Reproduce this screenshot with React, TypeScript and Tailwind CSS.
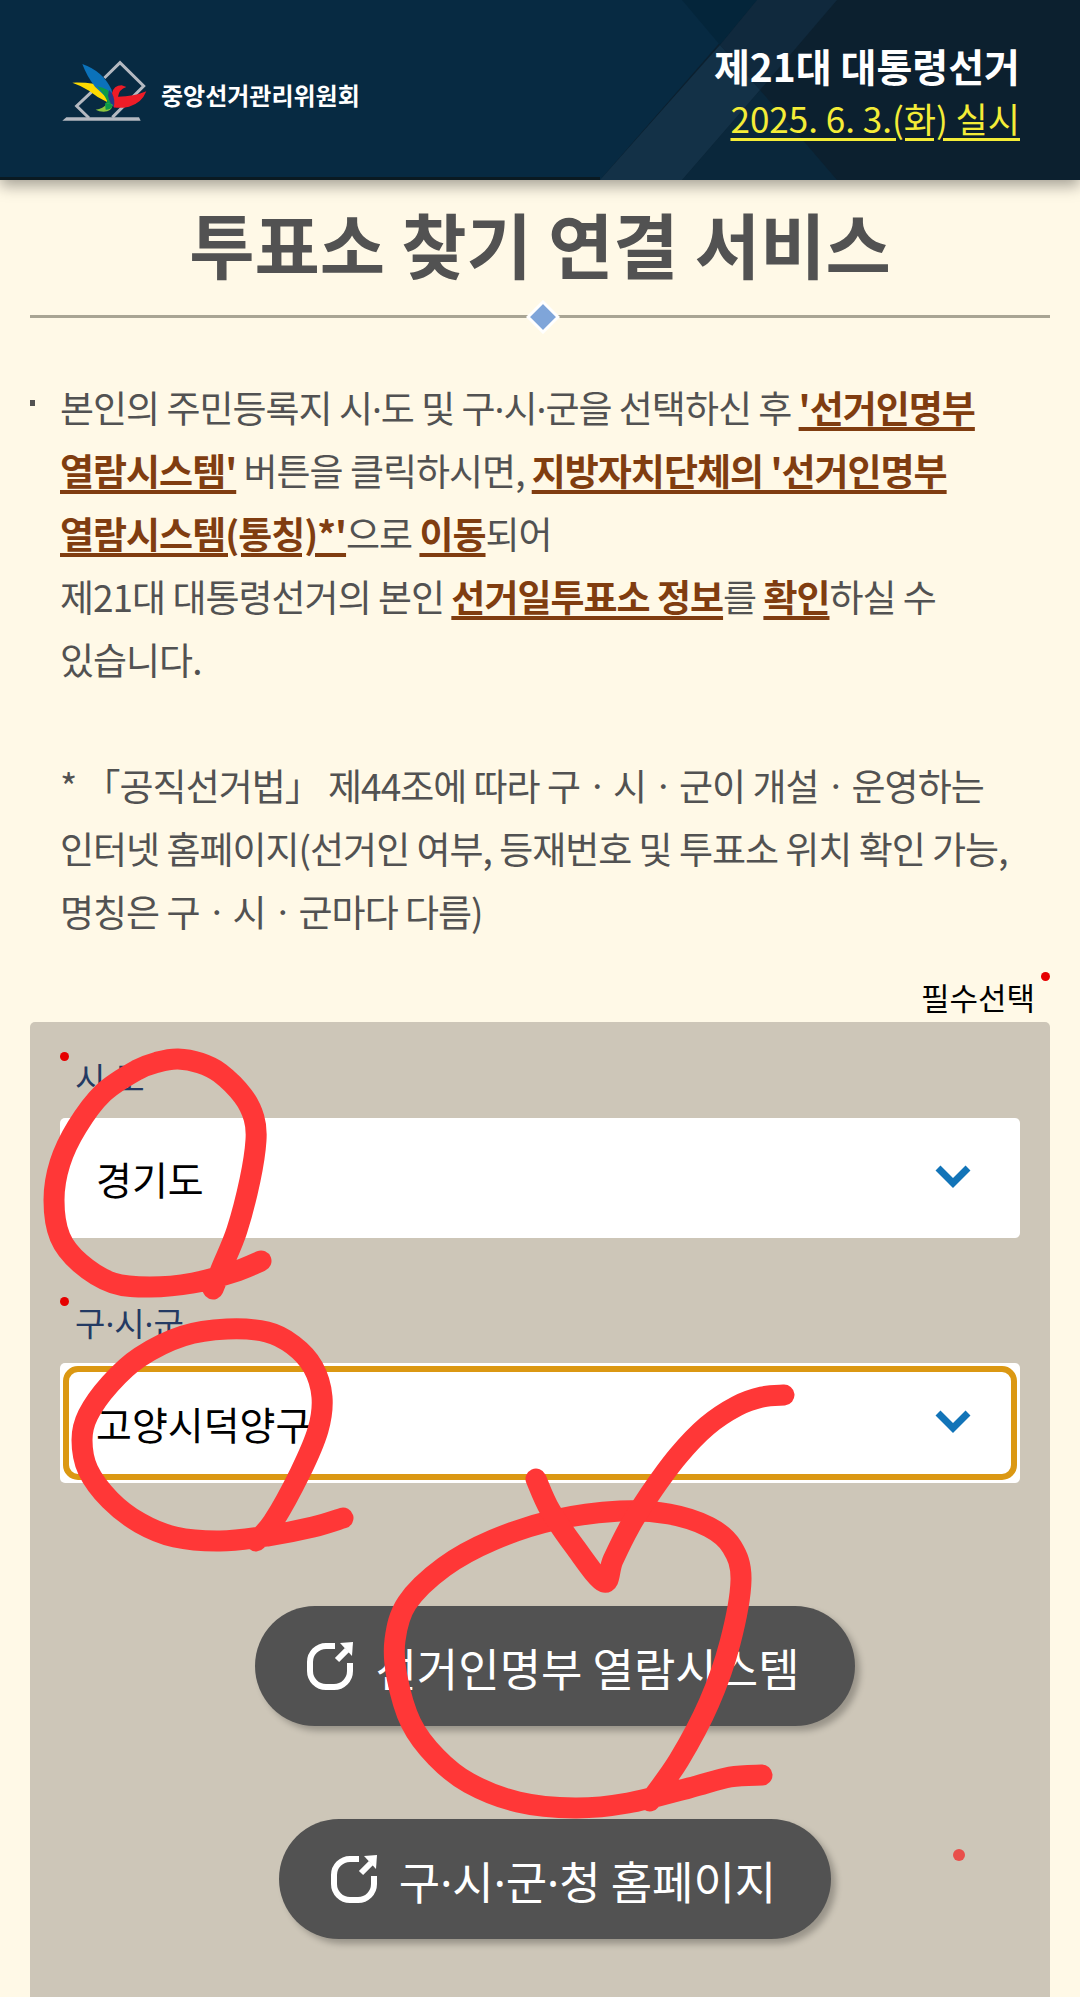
import { Fragment, useState } from "react";

type Point = [number, number];

const sidoOptions = ["경기도", "서울특별시", "인천광역시", "강원특별자치도"];
const gusigunOptions = ["고양시덕양구", "고양시일산동구", "고양시일산서구", "수원시장안구"];

const strokes: Point[][] = [
  [
    [213, 1289], [222, 1267], [237, 1230], [250, 1180], [256, 1140], [254, 1118], [243, 1096], [220, 1073],
    [200, 1063], [178, 1059], [158, 1062], [137, 1070], [103, 1093], [77, 1127], [60, 1163], [54, 1200],
    [60, 1237], [80, 1263], [113, 1283], [150, 1287], [193, 1283], [234, 1272], [261, 1261],
  ],
  [
    [256, 1541], [273, 1522], [300, 1473], [318, 1430], [322, 1397], [313, 1367], [293, 1345],
    [267, 1332], [227, 1329], [183, 1336], [140, 1357], [110, 1384], [88, 1415], [82, 1440],
    [88, 1470], [110, 1500], [140, 1523], [175, 1537], [220, 1541], [267, 1536], [313, 1527],
    [343, 1518],
  ],
  [
    [650, 1801], [679, 1760], [709, 1703], [730, 1643], [741, 1580], [732, 1547], [709, 1527],
    [669, 1514], [620, 1511], [554, 1520], [493, 1540], [444, 1567], [407, 1603], [395, 1640],
    [397, 1677], [411, 1723], [436, 1757], [469, 1783], [518, 1802], [575, 1808], [628, 1803],
    [689, 1788], [730, 1777], [762, 1775],
  ],
  [
    [536, 1479], [550, 1510], [575, 1547], [604, 1582], [613, 1560], [630, 1526], [650, 1494],
    [678, 1456], [707, 1426], [737, 1406], [762, 1397], [784, 1395],
  ],
];

// smooth curve through every point
function toPath(points: Point[]) {
  let d = `M${points[0][0]} ${points[0][1]}`;
  for (let i = 0; i < points.length - 1; i++) {
    const p0 = points[i - 1] ?? points[i];
    const p1 = points[i];
    const p2 = points[i + 1];
    const p3 = points[i + 2] ?? p2;
    d += ` C${p1[0] + (p2[0] - p0[0]) / 6} ${p1[1] + (p2[1] - p0[1]) / 6} ${p2[0] - (p3[0] - p1[0]) / 6} ${p2[1] - (p3[1] - p1[1]) / 6} ${p2[0]} ${p2[1]}`;
  }
  return d;
}

function Logo() {
  return (
    <svg viewBox="67 55 255 189" className="w-[85px] h-[63px]" aria-hidden="true">
      <path
        d="M194 112L241 66L312 136L218 230M148 232L111 196L160 150"
        fill="none"
        stroke="#b4b9c1"
        strokeWidth="9"
      />
      <path d="M80 230H298L303 240H68Z" fill="#b4b9c1" />
      <path d="M98 126Q165 124 198 142Q210 165 202 184Q175 172 148 150Q125 135 98 126Z" fill="#fddb00" />
      <path d="M128 70Q190 92 215 146Q222 165 212 178Q188 160 166 138Q142 108 128 70Z" fill="#0b72ba" />
      <path d="M172 137Q190 140 204 148Q222 170 218 190Q214 205 196 208Q194 190 203 182Q190 155 172 137Z" fill="#0c9a48" />
      <path d="M208 148Q230 165 226 202Q210 190 205 165Z" fill="#263a86" />
      <path d="M168 207Q190 205 203 188L219 192Q216 213 192 213Q178 213 168 207Z" fill="#8cc63e" />
      <path d="M196 188Q212 186 219 194Q216 208 198 207Z" fill="#0c9a48" />
      <path
        d="M217 158Q222 134 246 134L260 139Q238 146 235 168Q282 168 320 152Q306 188 268 198Q240 204 222 200Q228 180 217 158Z"
        fill="#ed1c27"
      />
    </svg>
  );
}

function GoIcon() {
  return (
    <svg viewBox="0 0 48 48" className="w-[48px] h-[48px] shrink-0" aria-hidden="true">
      <path
        d="M29 4H20A16 16 0 0 0 4 20V29A16 16 0 0 0 20 45H28A16 16 0 0 0 44 29V21"
        fill="none"
        stroke="#fff"
        strokeWidth="6"
      />
      <path d="M31 18L41 8" stroke="#fff" strokeWidth="6" />
      <path d="M34 1L47 0L46 14Z" fill="#fff" />
    </svg>
  );
}

function RequiredDot() {
  return <span className="w-[9px] h-[9px] rounded-full bg-[#e60000] shrink-0" />;
}

// the Korean face has a very wide middle dot, so take it from the Latin one
function Dotted({ text }: { text: string }) {
  return text.split("·").map((part, idx) => (
    <Fragment key={idx}>
      {idx > 0 && <span className="font-['Noto_Sans',sans-serif] leading-none">·</span>}
      {part}
    </Fragment>
  ));
}

function Key({ children }: { children: React.ReactNode }) {
  return (
    <strong className="font-bold text-[#803d10] underline decoration-[4px] underline-offset-[4px]">{children}</strong>
  );
}

function SelectField({
  id,
  label,
  options,
  active,
}: {
  id: string;
  label: string;
  options: string[];
  active?: boolean;
}) {
  const [value, setValue] = useState(options[0]);
  return (
    <div>
      <div className="flex gap-[6px] mb-4">
        <RequiredDot />
        <label htmlFor={id} className="text-[33px] leading-[50px] text-[#243a63]">
          <Dotted text={label} />
        </label>
      </div>
      <div className="relative rounded-[5px] bg-white">
        <select
          id={id}
          value={value}
          onChange={(e) => setValue(e.target.value)}
          className={`block w-full h-[120px] pl-9 pr-24 appearance-none rounded-[18px] bg-transparent text-[39px] text-black ${
            active ? "outline-[6px] outline-solid outline-[#db9813] -outline-offset-[9px]" : "outline-none"
          }`}
        >
          {options.map((option) => (
            <option key={option}>{option}</option>
          ))}
        </select>
        <svg
          viewBox="0 0 36 24"
          className="absolute right-[49px] top-[47px] w-[36px] h-[24px] pointer-events-none"
          aria-hidden="true"
        >
          <path d="M3 3L18 18L33 3" fill="none" stroke="#1274b8" strokeWidth="7" />
        </svg>
      </div>
    </div>
  );
}

function GoButton({ text }: { text: string }) {
  return (
    <button
      type="button"
      className="flex items-center gap-[21px] h-[120px] pl-[51px] pr-[55px] rounded-full bg-[#525252] text-white text-[45px] shadow-[5px_5px_6px_rgba(0,0,0,0.25)]"
    >
      <GoIcon />
      <span className="pt-1">
        <Dotted text={text} />
      </span>
    </button>
  );
}

export default function App() {
  return (
    <div className="relative min-h-screen flex flex-col overflow-hidden bg-[#fff9e7] font-['Noto_Sans_CJK_KR','Noto_Sans',sans-serif] break-keep">
      <header className="relative h-[180px] border-b-[3px] border-[#0a1a22] bg-[#072a42] shadow-[0_6px_14px_rgba(0,0,0,0.35)]">
        <svg viewBox="600 0 480 180" className="absolute right-0 top-0 w-[480px] h-[180px]" aria-hidden="true">
          <path d="M600 0H1080V180H600Z" fill="#072a42" />
          <path d="M757 0H1080V180H600Z" fill="#0c202f" />
          <path d="M682 0H757L720 45Z" fill="#04253a" />
          <path d="M760 90L837 180H682Z" fill="#0a273b" />
          <path d="M757 0H837L760 90L720 45Z" fill="#10293d" />
          <path d="M720 45L760 90L682 180H600Z" fill="#133147" />
        </svg>
        <div className="relative h-full flex items-center justify-between pl-[62px] pr-[60px]">
          <a href="#" className="flex items-center gap-[14px] pt-[3px] text-[24px] font-bold text-white">
            <Logo />
            <span className="pt-[10px]">중앙선거관리위원회</span>
          </a>
          <div className="pt-1 text-right">
            <p className="text-[39px] leading-[54px] font-bold text-white">제21대 대통령선거</p>
            <p className="text-[35px] leading-[51px] text-[#f4ec37] underline decoration-[3px] underline-offset-[5px]">
              2025. 6. 3.(화) 실시
            </p>
          </div>
        </div>
      </header>

      <main className="flex-1 flex flex-col px-[30px] pt-5">
        <h1 className="text-center text-[71px] leading-[84px] font-bold text-[#525252]">투표소 찾기 연결 서비스</h1>
        <div className="relative mt-[31px] h-[3px] bg-[#a9a594]">
          <svg viewBox="0 0 34 34" className="absolute left-1/2 -top-[15px] -ml-[14px] w-[34px] h-[34px]" aria-hidden="true">
            <path d="M17 2L32 17L17 32L2 17Z" fill="#7fa5d9" stroke="#fff" strokeWidth="3" />
          </svg>
        </div>

        <ul className="mt-[58px] text-[37px] leading-[63px] tracking-[-1px] text-[#525252]">
          <li className="flex">
            <span className="w-[30px] shrink-0 pt-6">
              <span className="block w-[5px] h-[6px] bg-[#525252]" />
            </span>
            <div>
              <p>
                <Dotted text="본인의 주민등록지 시·도 및 구·시·군을 선택하신 후 " />
                <Key>'선거인명부 열람시스템'</Key> 버튼을 클릭하시면,{" "}
                <Key>지방자치단체의 '선거인명부 열람시스템(통칭)*'</Key>으로 <Key>이동</Key>되어
                <br />
                제21대 대통령선거의 본인 <Key>선거일투표소 정보</Key>를 <Key>확인</Key>하실 수 있습니다.
              </p>
              <p className="mt-[63px]">
                * 「공직선거법」 제44조에 따라 구ㆍ시ㆍ군이 개설ㆍ운영하는 인터넷 홈페이지(선거인 여부, 등재번호 및 투표소
                위치 확인 가능, 명칭은 구ㆍ시ㆍ군마다 다름)
              </p>
            </div>
          </li>
        </ul>

        <div className="mt-[29px] flex justify-end gap-[6px]">
          <p className="text-[31px] leading-[50px] text-black">필수선택</p>
          <RequiredDot />
        </div>

        <form className="flex-1 rounded-t-[5px] bg-[#cdc6b8] px-[30px] pt-[30px] pb-[58px]">
          <div className="flex flex-col gap-[59px]">
            <SelectField id="sido" label="시·도" options={sidoOptions} />
            <SelectField id="gusigun" label="구·시·군" options={gusigunOptions} active />
          </div>
          <div className="mt-[123px] pl-[30px] flex flex-col items-center gap-[93px]">
            <GoButton text="선거인명부 열람시스템" />
            <GoButton text="구·시·군·청 홈페이지" />
          </div>
        </form>
      </main>

      {/* red pen marks */}
      <svg
        viewBox="0 0 1080 1997"
        className="absolute left-0 top-0 w-[1080px] h-[1997px] pointer-events-none"
        fill="none"
        stroke="#ff3737"
        strokeWidth="21"
        strokeLinecap="round"
        strokeLinejoin="round"
        aria-hidden="true"
      >
        {strokes.map((points, idx) => (
          <path key={idx} d={toPath(points)} />
        ))}
        <circle cx="959" cy="1855" r="6" fill="#e94f4b" stroke="none" />
      </svg>
    </div>
  );
}
